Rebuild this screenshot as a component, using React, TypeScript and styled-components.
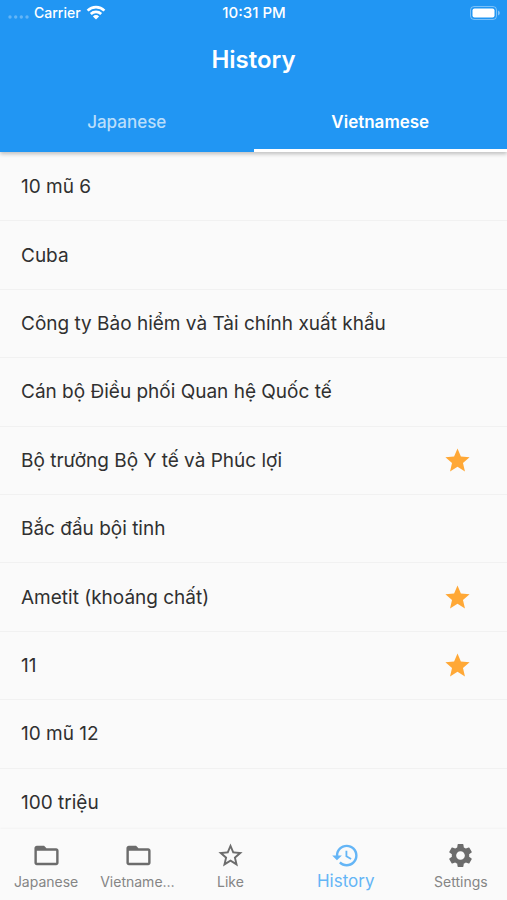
import React, { useState } from "react";
import styled, { createGlobalStyle } from "styled-components";
import { MdFolderOpen, MdHistory, MdSettings, MdStar, MdStarBorder } from "react-icons/md";

const GlobalStyle = createGlobalStyle`
  * { box-sizing: border-box; }
  html, body, #root { height: 100%; }
  body {
    margin: 0;
    background: #fafafa;
    font-family: Inter, "Noto Sans", sans-serif;
  }
  button { font: inherit; border: 0; background: none; padding: 0; cursor: pointer; }
`;

const Screen = styled.div`
  height: 100vh;
  display: flex;
  flex-direction: column;
  overflow: hidden;
`;

const Header = styled.header`
  flex: none;
  z-index: 1;
  background: #2196f3;
  color: #fff;
  box-shadow: 0 2px 4px rgba(0, 0, 0, 0.24);
`;

const StatusBar = styled.div`
  display: grid;
  grid-template-columns: 1fr auto 1fr;
  align-items: center;
  height: 25px;
  padding: 0 7px 0 8px;
  font-size: 14px;
  font-weight: 500;
`;

const Carrier = styled.div`
  display: flex;
  align-items: center;
  gap: 5px;
`;

const Clock = styled.time`
  font-size: 15px;
`;

const Battery = styled.svg`
  justify-self: end;
`;

const Title = styled.h1`
  margin: 0;
  height: 70px;
  line-height: 70px;
  font-size: 24px;
  font-weight: 600;
  text-align: center;
`;

const Tabs = styled.div`
  display: flex;
  height: 57px;
`;

const Tab = styled.button<{ $active: boolean }>`
  && {
    flex: 1;
    font-size: 17px;
    font-weight: ${(p) => (p.$active ? 600 : 500)};
    color: ${(p) => (p.$active ? "#fff" : "rgba(255, 255, 255, 0.7)")};
    border-bottom: 3px solid ${(p) => (p.$active ? "#fff" : "transparent")};
  }
`;

const ListArea = styled.main`
  flex: 1;
  min-height: 0;
  overflow: hidden;
`;

const List = styled.ul`
  margin: 0;
  padding: 1px 0 0;
  list-style: none;
  display: grid;
  grid-auto-rows: 1fr;
  min-height: 685px;
`;

const Row = styled.li`
  display: flex;
  align-items: center;
  justify-content: space-between;
  padding: 0 35px 0 21px;
  border-bottom: 1px solid #f1f1f1;
  font-size: 19px;
  color: #303030;
`;

const StarButton = styled.button`
  && {
    display: flex;
    color: #ffa836;
    font-size: 29px;
  }
`;

const BottomNav = styled.nav`
  flex: none;
  display: flex;
  height: 71px;
  background: #fafafa;
  box-shadow: 0 -1px 2px rgba(0, 0, 0, 0.03);
  z-index: 1;
`;

const NavItem = styled.button<{ $active: boolean }>`
  && {
    flex: ${(p) => (p.$active ? 3 : 2)} 1 0;
    min-width: 0;
    padding-top: 12px;
    display: flex;
    flex-direction: column;
    align-items: center;
    color: ${(p) => (p.$active ? "#64b5f6" : "#6c6c6c")};
  }
  svg { width: 29px; height: 29px; flex: none; }
`;

const NavLabel = styled.span<{ $active: boolean }>`
  max-width: 100%;
  padding: 0 8px;
  overflow: hidden;
  text-overflow: ellipsis;
  white-space: nowrap;
  line-height: ${(p) => (p.$active ? 22 : 24)}px;
  font-size: ${(p) => (p.$active ? 17 : 14)}px;
  color: ${(p) => (p.$active ? "#64b5f6" : "#858585")};
`;

const languages = ["Japanese", "Vietnamese"];

const entries = [
  { text: "10 mũ 6", liked: false },
  { text: "Cuba", liked: false },
  { text: "Công ty Bảo hiểm và Tài chính xuất khẩu", liked: false },
  { text: "Cán bộ Điều phối Quan hệ Quốc tế", liked: false },
  { text: "Bộ trưởng Bộ Y tế và Phúc lợi", liked: true },
  { text: "Bắc đẩu bội tinh", liked: false },
  { text: "Ametit (khoáng chất)", liked: true },
  { text: "11", liked: true },
  { text: "10 mũ 12", liked: false },
  { text: "100 triệu", liked: false },
];

const navItems = [
  { label: "Japanese", Icon: MdFolderOpen },
  { label: "Vietnamese", Icon: MdFolderOpen },
  { label: "Like", Icon: MdStarBorder },
  { label: "History", Icon: MdHistory },
  { label: "Settings", Icon: MdSettings },
];

export default function App() {
  const [language, setLanguage] = useState("Vietnamese");
  const [section, setSection] = useState(3);

  return (
    <Screen>
      <GlobalStyle />
      <Header>
        <StatusBar>
          <Carrier>
            <svg width="21" height="14" viewBox="0 0 21 14" fill="#fff" fillOpacity="0.3" aria-hidden="true">
              <circle cx="2" cy="11" r="1.7" />
              <circle cx="7.7" cy="11" r="1.7" />
              <circle cx="13.3" cy="11" r="1.7" />
              <circle cx="19" cy="11" r="1.7" />
            </svg>
            <span>Carrier</span>
            <svg width="20" height="15" viewBox="0 0 20 15" fill="none" stroke="#fff" strokeWidth="2.7" aria-hidden="true">
              <path d="M1.6 5.6a12 12 0 0 1 16.8 0" />
              <path d="M4.8 9a7.5 7.5 0 0 1 10.4 0" />
              <path d="M10 14.5 6.9 11.4a4.4 4.4 0 0 1 6.2 0z" fill="#fff" stroke="none" />
            </svg>
          </Carrier>
          <Clock>10:31 PM</Clock>
          <Battery width="30" height="14" viewBox="0 0 30 14" aria-hidden="true">
            <rect x="0.5" y="0.5" width="26" height="13" rx="3.5" fill="none" stroke="#fff" strokeOpacity="0.4" />
            <rect x="2.5" y="2.5" width="22" height="9" rx="2" fill="#fff" />
            <path d="M28 4.5a2.6 2.6 0 0 1 0 5z" fill="#fff" fillOpacity="0.45" />
          </Battery>
        </StatusBar>
        <Title>History</Title>
        <Tabs role="tablist">
          {languages.map((name) => (
            <Tab
              key={name}
              role="tab"
              aria-selected={name === language}
              $active={name === language}
              onClick={() => setLanguage(name)}
            >
              {name}
            </Tab>
          ))}
        </Tabs>
      </Header>
      <ListArea>
        <List>
          {entries.map(({ text, liked }) => (
            <Row key={text}>
              <span>{text}</span>
              {liked && (
                <StarButton aria-label={`Unlike ${text}`}>
                  <MdStar />
                </StarButton>
              )}
            </Row>
          ))}
        </List>
      </ListArea>
      <BottomNav>
        {navItems.map(({ label, Icon }, index) => (
          <NavItem key={label} $active={index === section} onClick={() => setSection(index)}>
            <Icon />
            <NavLabel $active={index === section}>{label}</NavLabel>
          </NavItem>
        ))}
      </BottomNav>
    </Screen>
  );
}
